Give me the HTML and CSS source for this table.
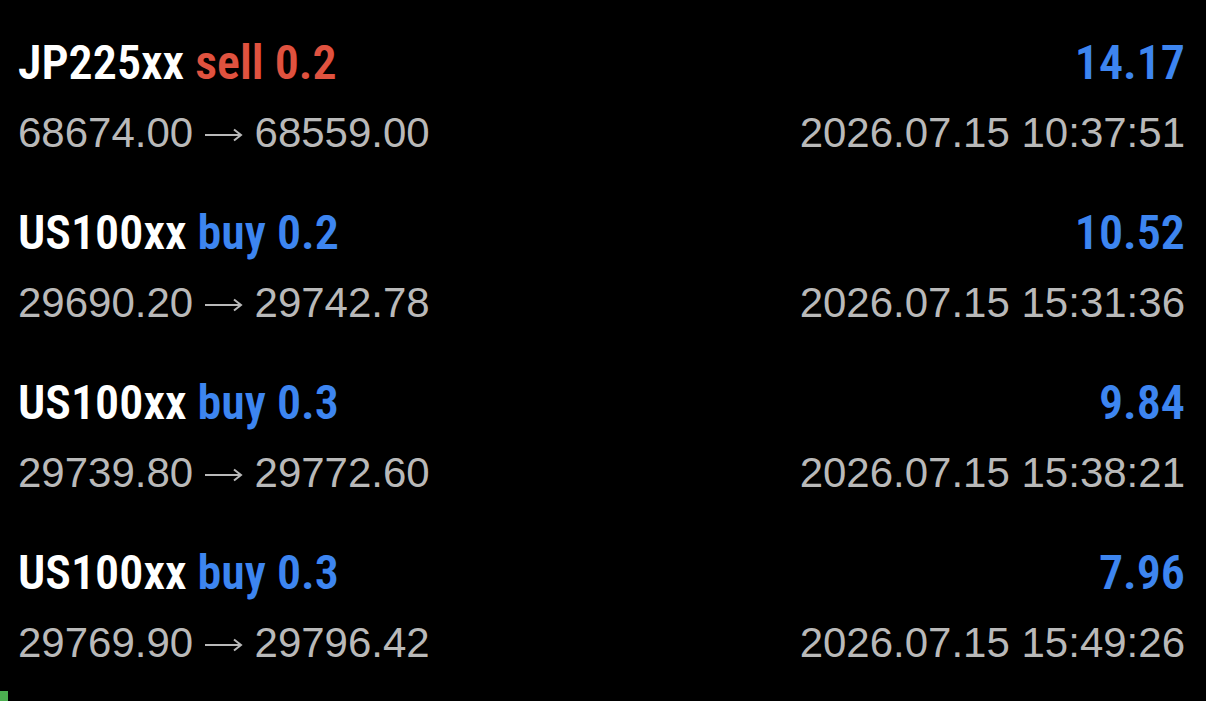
FILE: index.html
```html
<!DOCTYPE html>
<html lang="en">
<head>
    <meta charset="UTF-8">
    <title>History</title>
    <link rel="stylesheet" href="styles.css">
</head>
<body>

    <div class="deals">
        <div class="deal">
            <div class="deal-top">
                <div class="deal-name">JP225xx <span class="sell">sell 0.2</span></div>
                <div class="deal-profit">14.17</div>
            </div>
            <div class="deal-bottom">
                <div class="deal-prices">68674.00 <svg class="arrow" width="38" height="14" viewBox="0 0 38 14"><path d="M0 7H36M29 1.5L36 7L29 12.5" fill="none" stroke="#b9b9b9" stroke-width="2"/></svg> 68559.00</div>
                <div class="deal-time">2026.07.15 10:37:51</div>
            </div>
        </div>
        <div class="deal">
            <div class="deal-top">
                <div class="deal-name">US100xx <span class="buy">buy 0.2</span></div>
                <div class="deal-profit">10.52</div>
            </div>
            <div class="deal-bottom">
                <div class="deal-prices">29690.20 <svg class="arrow" width="38" height="14" viewBox="0 0 38 14"><path d="M0 7H36M29 1.5L36 7L29 12.5" fill="none" stroke="#b9b9b9" stroke-width="2"/></svg> 29742.78</div>
                <div class="deal-time">2026.07.15 15:31:36</div>
            </div>
        </div>
        <div class="deal">
            <div class="deal-top">
                <div class="deal-name">US100xx <span class="buy">buy 0.3</span></div>
                <div class="deal-profit">9.84</div>
            </div>
            <div class="deal-bottom">
                <div class="deal-prices">29739.80 <svg class="arrow" width="38" height="14" viewBox="0 0 38 14"><path d="M0 7H36M29 1.5L36 7L29 12.5" fill="none" stroke="#b9b9b9" stroke-width="2"/></svg> 29772.60</div>
                <div class="deal-time">2026.07.15 15:38:21</div>
            </div>
        </div>
        <div class="deal">
            <div class="deal-top">
                <div class="deal-name">US100xx <span class="buy">buy 0.3</span></div>
                <div class="deal-profit">7.96</div>
            </div>
            <div class="deal-bottom">
                <div class="deal-prices">29769.90 <svg class="arrow" width="38" height="14" viewBox="0 0 38 14"><path d="M0 7H36M29 1.5L36 7L29 12.5" fill="none" stroke="#b9b9b9" stroke-width="2"/></svg> 29796.42</div>
                <div class="deal-time">2026.07.15 15:49:26</div>
            </div>
        </div>
    </div>

    <div class="corner-mark"></div>

</body>
</html>
```

FILE: styles.css
```css
html, body {
    margin: 0;
    padding: 0;
    height: 100%;
    background-color: #000;
    overflow: hidden;
}

.deals {
    display: flex;
    flex-direction: column;
    padding-top: 27px;
}

.deal {
    height: 170px;
    padding: 0 21px 0 18px;
    display: flex;
    flex-direction: column;
}

.deal-top, .deal-bottom {
    display: flex;
    justify-content: space-between;
    align-items: center;
}

.deal-top {
    height: 70px;
    font-family: Roboto, "Open Sans", sans-serif;
    font-stretch: 75%;
    font-weight: 600;
    font-size: 48px;
    color: #fff;
}

.deal-bottom {
    height: 70px;
    margin-top: 1px;
    font-family: "Liberation Sans", Arial, sans-serif;
    font-size: 42px;
    color: #b9b9b9;
}

.arrow {
    vertical-align: 5px;
}

.sell {
    color: #e0523f;
}

.buy, .deal-profit {
    color: #3d85f0;
}

.corner-mark {
    position: fixed;
    left: 0;
    bottom: 0;
    width: 8px;
    height: 10px;
    background-color: #4caf50;
}
```
